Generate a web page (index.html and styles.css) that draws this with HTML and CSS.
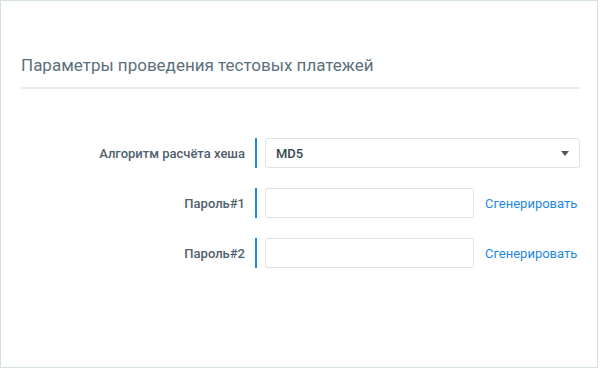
FILE: index.html
```html
<!doctype html>
<html lang="ru">
<head>
  <meta charset="utf-8">
  <title>Параметры проведения тестовых платежей</title>
  <link rel="stylesheet" href="styles.css">
</head>
<body>
  <div class="panel">
    <h2 class="panel-title">Параметры проведения тестовых платежей</h2>

    <form class="settings">
      <label class="settings-label" for="algo">Алгоритм расчёта хеша</label>
      <div class="settings-control">
        <div class="select-wrap">
          <select id="algo" class="field field-select">
            <option>MD5</option>
            <option>SHA256</option>
            <option>SHA512</option>
          </select>
          <svg class="select-arrow" width="8" height="5" viewBox="0 0 8 5"><path d="M0 0h8L4 5z" fill="#555"/></svg>
        </div>
      </div>

      <label class="settings-label" for="pass1">Пароль#1</label>
      <div class="settings-control">
        <input id="pass1" class="field field-input" type="text">
        <a href="#" class="generate">Сгенерировать</a>
      </div>

      <label class="settings-label" for="pass2">Пароль#2</label>
      <div class="settings-control">
        <input id="pass2" class="field field-input" type="text">
        <a href="#" class="generate">Сгенерировать</a>
      </div>
    </form>
  </div>
</body>
</html>
```

FILE: styles.css
```css
* {
  box-sizing: border-box;
}

body {
  margin: 0;
  background: #fff;
  font-family: 'Roboto', 'Liberation Sans', sans-serif;
  color: #455a64;
}

.panel {
  width: 598px;
  height: 368px;
  border: 1px solid #d5dfe6;
  padding: 52px 17px 0 20px;
  background: #fff;
}

.panel-title {
  margin: 0;
  padding-bottom: 10px;
  border-bottom: 2px solid #e6ebef;
  font-size: 17px;
  line-height: 24px;
  font-weight: normal;
  color: #5b707c;
}

.settings {
  display: grid;
  grid-template-columns: 224px 1fr;
  column-gap: 10px;
  row-gap: 20px;
  margin-top: 49px;
}

.settings-label {
  display: flex;
  align-items: center;
  justify-content: flex-end;
  height: 30px;
  font-size: 13px;
  font-weight: 500;
  color: #4f616c;
}

.settings-control {
  display: flex;
  align-items: center;
  gap: 11px;
  height: 30px;
  padding-left: 8px;
  border-left: 2px solid #1e88e5;
}

.field {
  height: 30px;
  border: 1px solid #dde4ea;
  border-radius: 3px;
  background: #fff;
  font-family: inherit;
  font-size: 13px;
  color: #37474f;
  outline: none;
}

.select-wrap {
  position: relative;
  flex: 1;
}

.field-select {
  width: 100%;
  padding: 0 24px 0 10px;
  appearance: none;
  -webkit-appearance: none;
  font-weight: 500;
}

.select-arrow {
  position: absolute;
  right: 11px;
  top: 13px;
  pointer-events: none;
}

.field-input {
  width: 209px;
  padding: 0 10px;
}

.generate {
  font-size: 13px;
  color: #1e88e5;
  text-decoration: none;
}
```
